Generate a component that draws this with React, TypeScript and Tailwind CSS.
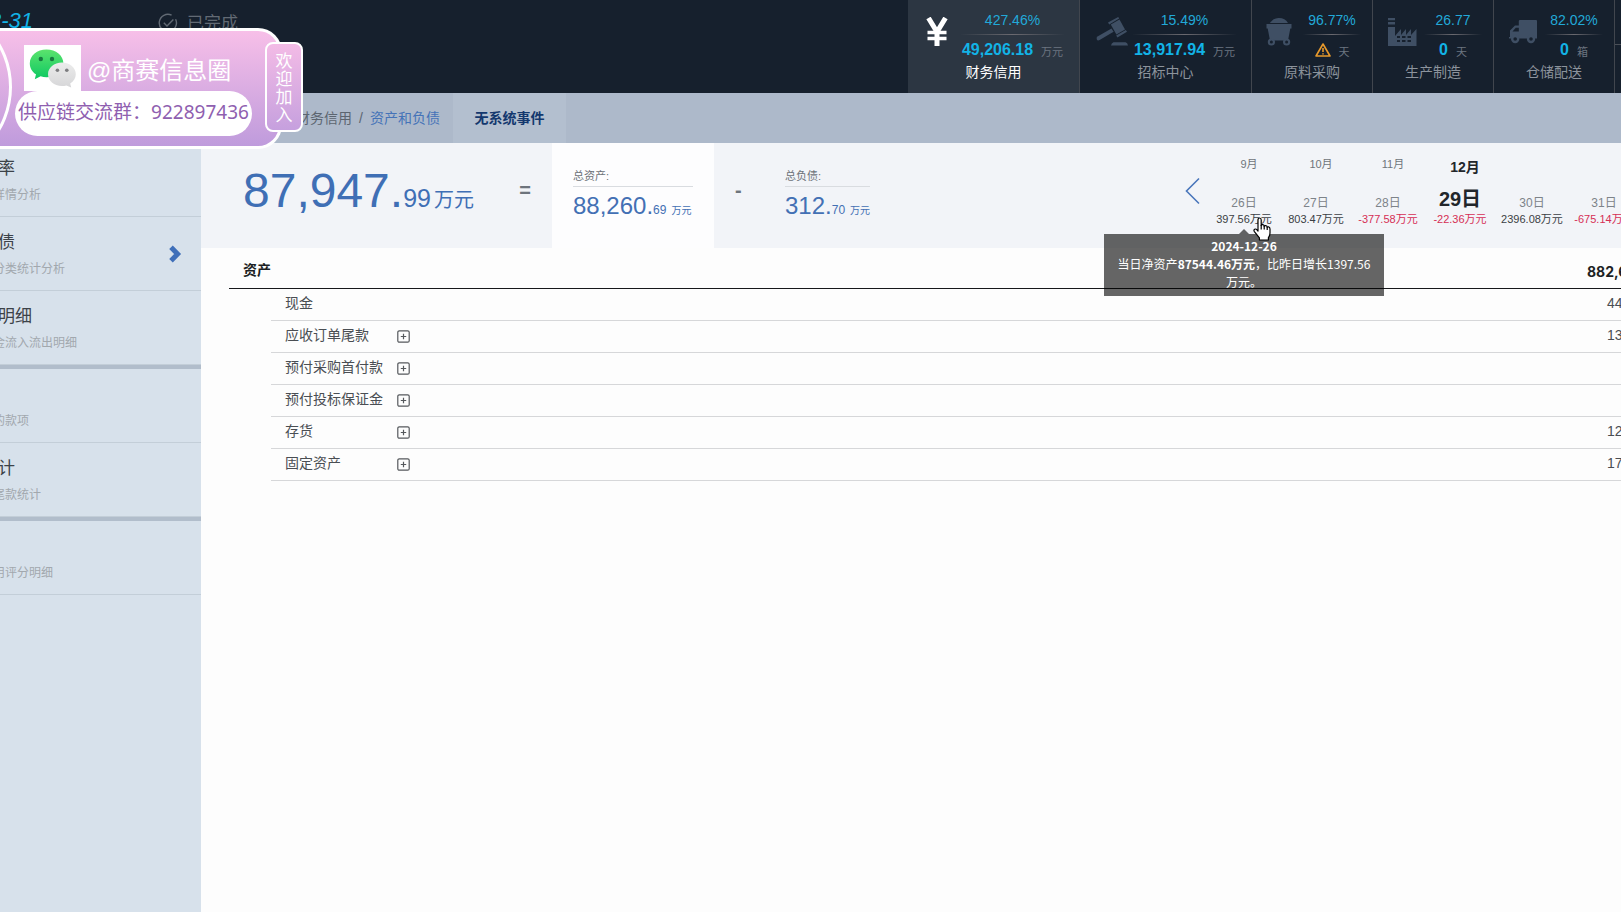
import type { ReactNode } from "react";

const iconColor = "fill-[#3f4f64]";

function YenIcon() {
  return (
    <svg viewBox="-2 0 26 30" className="h-[30px] w-[26px] fill-none stroke-white" strokeWidth="5" aria-hidden="true">
      <path d="M2.5 1 L11 15 L19.5 1 M11 14 V29" />
      <path d="M1.5 15.5 H20.5 M1.5 21.5 H20.5" strokeWidth="3.4" />
    </svg>
  );
}

function GavelIcon() {
  return (
    <svg viewBox="0 0 32 30" className={`h-[30px] w-8 ${iconColor}`} aria-hidden="true">
      <path d="M1.5 19.5 L15.5 11.5 L17.6 14.8 L3.6 23 Q1.6 24 .8 22.4 Q0 20.6 1.5 19.5Z" />
      <path d="M14.8 7.6 L23.5 2.6 L29 12.6 L20.4 17.4Z" />
      <path d="M12 5.6 L22.2 0 L23.2 1.6 L13.2 7.4Z M20.2 18.6 L29.8 13 L31 14.8 L21.4 20.6Z" />
      <path d="M17.5 25.2 H29.5 Q31.5 25.8 32 28.5 H15 Q15.4 26 17.5 25.2Z" />
    </svg>
  );
}

function MineCartIcon() {
  return (
    <svg viewBox="0 0 26 30" className={`h-[30px] w-[26px] ${iconColor}`} aria-hidden="true">
      <path d="M4 6 Q7 1.2 12.5 1 Q19 .8 22 6Z" />
      <path d="M.5 7 H25.5 V11.5 H24.3 L22 23.4 H4 L1.7 11.5 H.5Z" />
      <circle cx="5.4" cy="25" r="3.6" />
      <circle cx="20.6" cy="25" r="3.6" />
      <circle cx="5.4" cy="25" r="1.5" className="fill-[#16202d]" />
      <circle cx="20.6" cy="25" r="1.5" className="fill-[#16202d]" />
    </svg>
  );
}

function FactoryIcon() {
  return (
    <svg viewBox="0 0 30 30" className={`h-[30px] w-[30px] ${iconColor}`} aria-hidden="true">
      <path d="M1 1 H8 V3.2 H1Z M1 5 H8 V7.6 H1Z M1 10 H8 V19 L14 12 V18 L19 12 V18 L24 12 V18 L29.5 12 V29 H1Z" />
      <path
        d="M10 19 H13 V21 H10Z M15 19 H18.5 V21 H15Z M20.5 19 H24 V21 H20.5Z M10 23 H13 V25 H10Z M15 23 H18.5 V25 H15Z M20.5 23 H24 V25 H20.5Z"
        className="fill-[#16202d]"
      />
    </svg>
  );
}

function TruckIcon() {
  return (
    <svg viewBox="0 0 30 30" className={`h-[30px] w-[30px] ${iconColor}`} aria-hidden="true">
      <path d="M12 3 H28 Q29 3 29 4 V21.5 H1 V20 H2 V13.5 L7 8.5 H10.8 V4 Q10.8 3 12 3Z" />
      <path d="M4.5 14.4 L7.8 10.8 H10.8 V14.4Z" className="fill-[#16202d]" />
      <circle cx="7.2" cy="22" r="4.2" />
      <circle cx="23" cy="22" r="4.2" />
      <circle cx="7.2" cy="22" r="1.8" className="fill-[#16202d]" />
      <circle cx="23" cy="22" r="1.8" className="fill-[#16202d]" />
    </svg>
  );
}

function WarningIcon() {
  return (
    <svg viewBox="0 0 16 14" className="h-[14px] w-4 fill-none stroke-[#e89a2c]" strokeWidth="1.6" strokeLinejoin="round" role="img" aria-label="预警">
      <path d="M8 1 L15 13 H1Z" />
      <path d="M8 5 V9 M8 10.2 V11.6" />
    </svg>
  );
}

type Module = {
  name: string;
  icon: ReactNode;
  rate: string;
  value: ReactNode;
  unit: string;
  wide?: boolean;
  active?: boolean;
};

const modules: Module[] = [
  { name: "财务信用", icon: <YenIcon />, rate: "427.46%", value: "49,206.18", unit: "万元", wide: true, active: true },
  { name: "招标中心", icon: <GavelIcon />, rate: "15.49%", value: "13,917.94", unit: "万元", wide: true },
  { name: "原料采购", icon: <MineCartIcon />, rate: "96.77%", value: <WarningIcon />, unit: "天" },
  { name: "生产制造", icon: <FactoryIcon />, rate: "26.77", value: "0", unit: "天" },
  { name: "仓储配送", icon: <TruckIcon />, rate: "82.02%", value: "0", unit: "箱" },
];

function ModuleLink({ item }: { item: Module }) {
  return (
    <a
      href="#"
      className={`flex h-full flex-col border-r border-[#41464e] pt-[11px] ${item.wide ? "w-[172px]" : "w-[121px]"} ${
        item.active ? "bg-[#2c3642]" : ""
      }`}
    >
      <span className={`flex ${item.wide ? "pr-[14px] pl-4" : "pr-[11px] pl-[14px]"}`}>
        <span className="flex pt-[6px]">{item.icon}</span>
        <span className={`ml-auto flex flex-col items-center ${item.wide ? "w-[105px]" : "w-[58px]"}`}>
          <span className="text-[14px] leading-[18px] text-[#22a9d8]">{item.rate}</span>
          <span className="mt-[5px] h-px w-full bg-linear-to-r from-transparent via-[#6b6a70] to-transparent" />
          <span className="mt-[5px] flex h-5 items-center gap-2">
            <b className="text-[16px] leading-5 text-[#12b3e6]">{item.value}</b>
            <span className="pt-[3px] text-[11px] leading-4 text-[#6c7580]">{item.unit}</span>
          </span>
        </span>
      </span>
      <span className={`mt-[2px] text-center text-[14px] leading-5 ${item.active ? "text-white" : "text-[#8c939c]"}`}>{item.name}</span>
    </a>
  );
}

type SideItem = { title: string; note: string; current?: boolean; groupEnd?: boolean };

const sideItems: SideItem[] = [
  { title: "率", note: "详情分析" },
  { title: "债", note: "分类统计分析", current: true },
  { title: "明细", note: "金流入流出明细", groupEnd: true },
  { title: "", note: "的款项" },
  { title: "计", note: "尾款统计", groupEnd: true },
  { title: "", note: "用评分明细" },
];

function Sidebar() {
  return (
    <nav className="w-[201px] shrink-0 overflow-hidden bg-[#d7e1eb]">
      {sideItems.map((item) => (
        <div key={item.note} className={item.groupEnd ? "border-b-4 border-[#b1bdcb]" : ""}>
          <a href="#" className="flex h-[74px] items-center justify-between border-b border-[#c3ced8] pr-[19px]">
            <span className="flex flex-col pt-1 whitespace-nowrap">
              <span className="-ml-[2px] h-[26px] text-[17px] leading-[26px] text-[#3c4248]">{item.title}</span>
              <span className="-ml-[7px] text-[12px] leading-[26px] text-[#a2a8ae]">{item.note}</span>
            </span>
            {item.current && (
              <svg viewBox="0 0 14 18" className="h-[18px] w-[14px] fill-none stroke-[#3f6fb9]" strokeWidth="5" aria-hidden="true">
                <path d="M3 2.2 L9.6 9 L3 15.8" />
              </svg>
            )}
          </a>
        </div>
      ))}
    </nav>
  );
}

const days = [
  { month: "9月", day: "26日", value: "397.56万元" },
  { month: "10月", day: "27日", value: "803.47万元" },
  { month: "11月", day: "28日", value: "-377.58万元" },
  { month: "12月", day: "29日", value: "-22.36万元", active: true },
  { month: "", day: "30日", value: "2396.08万元" },
  { month: "", day: "31日", value: "-675.14万元" },
];

function HandCursor() {
  return (
    <svg viewBox="0 0 18 24" className="absolute top-[74px] left-[45px] z-20 h-6 w-[18px] fill-white stroke-black" strokeWidth="1.2" strokeLinejoin="round" aria-hidden="true">
      <path d="M5 14 V3 Q5 1 6.6 1 Q8.2 1 8.2 3 V8.5 Q8.4 7.4 9.8 7.6 Q11.2 7.8 11.2 9.2 Q11.6 8.4 12.8 8.6 Q14.2 8.8 14.2 10.2 Q14.6 9.6 15.6 9.8 Q17 10.2 17 12 V16 Q17 19 15.4 20.6 V23 H6.4 V20.8 L1.4 14.6 Q.4 13 1.6 12.2 Q3 11.6 4 12.8Z" />
      <path d="M8.2 8 V12.5 M11.2 9 V12.5 M14.2 10 V13" fill="none" />
    </svg>
  );
}

function Tooltip() {
  return (
    <div role="tooltip" className="absolute top-[86px] left-1/2 z-10 flex w-[280px] -translate-x-1/2 flex-col items-center">
      <svg viewBox="0 0 10 5" className="h-[5px] w-[10px] fill-black/60" aria-hidden="true">
        <path d="M5 0 L10 5 H0Z" />
      </svg>
      <p className="w-full bg-black/60 pt-[3px] pb-[5px] text-center font-['Noto_Sans_CJK_SC',sans-serif] text-[12px] leading-[18px] whitespace-nowrap text-white">
        <b>2024-12-26</b>
        <br />
        当日净资产<b>87544.46万元</b>，比昨日增长1397.56
        <br />
        万元。
      </p>
    </div>
  );
}

function DateStrip() {
  return (
    <div className="-mr-[19px] ml-auto flex shrink-0">
      <button type="button" aria-label="前一天" className="mt-[34px] mr-[7px] h-7 w-[16px]">
        <svg viewBox="0 0 16 28" className="h-7 w-4 fill-none stroke-[#4a76bb]" strokeWidth="1.6" aria-hidden="true">
          <path d="M14 1.5 L1.5 14 L14 26.5" />
        </svg>
      </button>
      {days.map((d, i) => (
        <div key={d.day} className="relative flex w-[72px] flex-col items-center whitespace-nowrap">
          <div
            className={`h-9 pt-[13px] pl-[10px] ${
              d.active ? "text-[14px] leading-[22px] font-bold text-[#22262b]" : "text-[11px] leading-4 text-[#6f757b]"
            }`}
          >
            {d.month}
          </div>
          <div className="flex h-8 items-end">
            <span className={d.active ? "text-[20px] leading-6 font-bold text-[#22262b]" : "text-[12px] leading-4 text-[#7d8389]"}>{d.day}</span>
          </div>
          <div className={`text-[11px] leading-4 ${d.value.startsWith("-") ? "text-[#d62f55]" : "text-[#3b3f44]"}`}>{d.value}</div>
          {i === 0 && <Tooltip />}
          {i === 0 && <HandCursor />}
        </div>
      ))}
    </div>
  );
}

function Amount({ label, whole, cents }: { label: string; whole: string; cents: string }) {
  return (
    <div className="whitespace-nowrap">
      <div className="border-b border-[#d9dce0] pt-6 pb-px text-[11px] leading-[18px] text-[#6c7278]">{label}</div>
      <div className="pt-[5px] text-[24px] leading-7 text-[#4370b4]">
        {whole}
        <span className="text-[12px]">{cents}</span>
        <span className="ml-[5px] text-[10px]">万元</span>
      </div>
    </div>
  );
}

function Summary() {
  return (
    <section className="flex h-[105px] bg-[#f2f4f8]">
      <div className="flex w-[351px] shrink-0 items-start justify-between pr-[21px] pl-[42px]">
        <div className="pt-5 text-[48px] leading-[56px] whitespace-nowrap text-[#3f6fb5]">
          87,947.
          <span className="text-[25px]">99</span>
          <span className="ml-[3px] text-[20px]">万元</span>
        </div>
        <span className="pt-[35px] text-[20px] leading-6 font-bold text-[#6d747c]">=</span>
      </div>
      <div className="w-[162px] shrink-0 bg-[#fdfdfe] px-[21px]">
        <Amount label="总资产:" whole="88,260." cents="69" />
      </div>
      <div className="flex shrink-0 pl-[21px]">
        <span className="w-[50px] pt-[35px] text-[20px] leading-6 font-bold text-[#6d747c]">-</span>
        <Amount label="总负债:" whole="312." cents="70" />
      </div>
      <DateStrip />
    </section>
  );
}

const assets = [
  { name: "现金", value: "44", open: false },
  { name: "应收订单尾款", value: "13", open: true },
  { name: "预付采购首付款", value: "", open: true },
  { name: "预付投标保证金", value: "", open: true },
  { name: "存货", value: "12", open: true },
  { name: "固定资产", value: "17", open: true },
];

function AssetTable() {
  return (
    <div className="overflow-hidden pl-7">
      <table className="w-full table-fixed border-collapse text-left text-[14px] text-[#4a4e53]">
        <colgroup>
          <col className="w-[42px]" />
          <col className="w-[126px]" />
          <col />
          <col className="w-[34px]" />
        </colgroup>
        <thead>
          <tr className="h-10 border-b border-[#16181b] text-[#1c1f23]">
            <th colSpan={3} className="pt-[6px] pl-[14px] font-bold">
              资产
            </th>
            <th className="pt-2 font-['Inter','Liberation_Sans',sans-serif] font-bold whitespace-nowrap">882,6</th>
          </tr>
        </thead>
        <tbody>
          {assets.map((row) => (
            <tr key={row.name} className="h-8">
              <td />
              <td className="border-b border-[#d6d7d9] pb-[2px] pl-[14px] leading-5 whitespace-nowrap">{row.name}</td>
              <td className="border-b border-[#d6d7d9]">
                {row.open && (
                  <button type="button" aria-label={`展开${row.name}`} className="mt-px block">
                    <svg viewBox="0 0 13 13" className="h-[13px] w-[13px] fill-none stroke-[#55585c]" strokeWidth="1.2" aria-hidden="true">
                      <rect x=".8" y=".8" width="11.4" height="11.4" rx="1.5" />
                      <path d="M6.5 3.8 V9.2 M3.8 6.5 H9.2" />
                    </svg>
                  </button>
                )}
              </td>
              <td className="border-b border-[#d6d7d9] pb-[2px] pl-5 leading-5 whitespace-nowrap">{row.value}</td>
            </tr>
          ))}
        </tbody>
      </table>
    </div>
  );
}

function WeChatLogo() {
  return (
    <svg viewBox="0 0 57 46" className="h-[46px] w-[57px] bg-white" aria-hidden="true">
      <defs>
        <linearGradient id="wechatGreen" x1="0" y1="0" x2="0" y2="1">
          <stop offset="0" stopColor="#5be36d" />
          <stop offset="1" stopColor="#0dc862" />
        </linearGradient>
        <linearGradient id="wechatGrey" x1="0" y1="0" x2="0" y2="1">
          <stop offset="0" stopColor="#ececec" />
          <stop offset="1" stopColor="#d6d6d8" />
        </linearGradient>
      </defs>
      <path d="M22.5 4.5 C13 4.5 5.8 10.6 5.8 18.4 C5.8 23 8.2 26.8 12 29.3 L10.8 34.3 L16.6 31.3 C18.6 31.9 20.4 32.2 22.6 32.2 C32 32.2 39.4 26 39.4 18.4 C39.4 10.6 32 4.5 22.5 4.5Z" fill="url(#wechatGreen)" />
      <circle cx="16.8" cy="14" r="2.2" fill="#187a40" />
      <circle cx="28" cy="14" r="2.2" fill="#187a40" />
      <path d="M38 17.6 C30 17.6 24 22.8 24 29.3 C24 35.8 30 41 38 41 C39.6 41 41 40.8 42.4 40.4 L47.2 42.4 L46.2 38.6 C49.6 36.5 51.8 33.1 51.8 29.3 C51.8 22.8 46 17.6 38 17.6Z" fill="url(#wechatGrey)" />
      <circle cx="33.4" cy="25.2" r="1.8" fill="#7d7d80" />
      <circle cx="42.8" cy="25.2" r="1.8" fill="#7d7d80" />
    </svg>
  );
}

function Banner() {
  return (
    <aside className="absolute top-7 left-0 z-30 h-[121px] w-[303px]">
      <div className="relative h-full w-[282px] overflow-hidden rounded-r-3xl border-y-3 border-r-3 border-white bg-linear-to-b from-[#f7bfe8] to-[#bf9bdc]">
        <div className="absolute -top-[30px] -left-[160px] size-[172px] rounded-full border-3 border-white" />
        <div className="flex items-center gap-[6px] pt-[14px] pl-6">
          <WeChatLogo />
          <span className="pt-[5px] text-[24px] leading-8 whitespace-nowrap text-white">@商赛信息圈</span>
        </div>
        <div className="ml-[15px] flex h-[45px] w-[237px] items-center justify-center rounded-full bg-white pb-[3px] font-['Noto_Sans','Noto_Sans_CJK_SC',sans-serif] text-[19px] leading-6 whitespace-nowrap text-[#8f5fb0]">
          供应链交流群：922897436
        </div>
      </div>
      <div className="absolute top-[14px] right-0 flex h-[90px] w-[38px] items-center justify-center rounded-lg border-2 border-white bg-linear-to-b from-[#f3bbe6] to-[#c6a0de] px-2 pt-[3px] text-center text-[17px] leading-[18px] text-white">
        欢迎加入
      </div>
    </aside>
  );
}

export default function App() {
  return (
    <div className="relative flex min-h-screen flex-col overflow-hidden bg-[#fdfdfd] font-['Liberation_Sans','Noto_Sans_CJK_SC',sans-serif]">
      <header className="flex h-[93px] items-start bg-[#16202d]">
        <div className="-ml-[11px] pt-[7px] text-[22px] leading-7 whitespace-nowrap text-[#12b3e6] italic">2-31</div>
        <div className="ml-[125px] flex items-center gap-[9px] pt-[9px] text-[#626a74]">
          <svg viewBox="0 0 20 20" className="h-5 w-5 fill-none stroke-current" strokeWidth="1.4" aria-hidden="true">
            <path d="M17.6 6.2 A8.6 8.6 0 1 1 13.6 2.2" />
            <path d="M5.8 9.8 L9 13 L15.4 6.4" />
          </svg>
          <span className="pt-[3px] text-[17px] leading-6">已完成</span>
        </div>
        <nav className="ml-auto flex h-full">
          {modules.map((m) => (
            <ModuleLink key={m.name} item={m} />
          ))}
          <div className="w-[6px] pt-11">
            <div className="h-px bg-[#4a4f57]" />
          </div>
        </nav>
      </header>

      <div className="flex h-[50px] bg-[#adb9ca] pl-[296px] text-[14px] leading-[50px] whitespace-nowrap">
        <div className="flex w-[157px] gap-[7px]">
          <a href="#" className="text-[#5c6570]">
            财务信用
          </a>
          <span className="text-[#5c6570]">/</span>
          <a href="#" className="text-[#4573b8]">
            资产和负债
          </a>
        </div>
        <div className="w-[113px] bg-[#b3bfcf] text-center font-bold text-[#14386e]">无系统事件</div>
      </div>

      <div className="flex flex-1">
        <Sidebar />
        <main className="min-w-0 flex-1">
          <Summary />
          <AssetTable />
        </main>
      </div>

      <Banner />
    </div>
  );
}
